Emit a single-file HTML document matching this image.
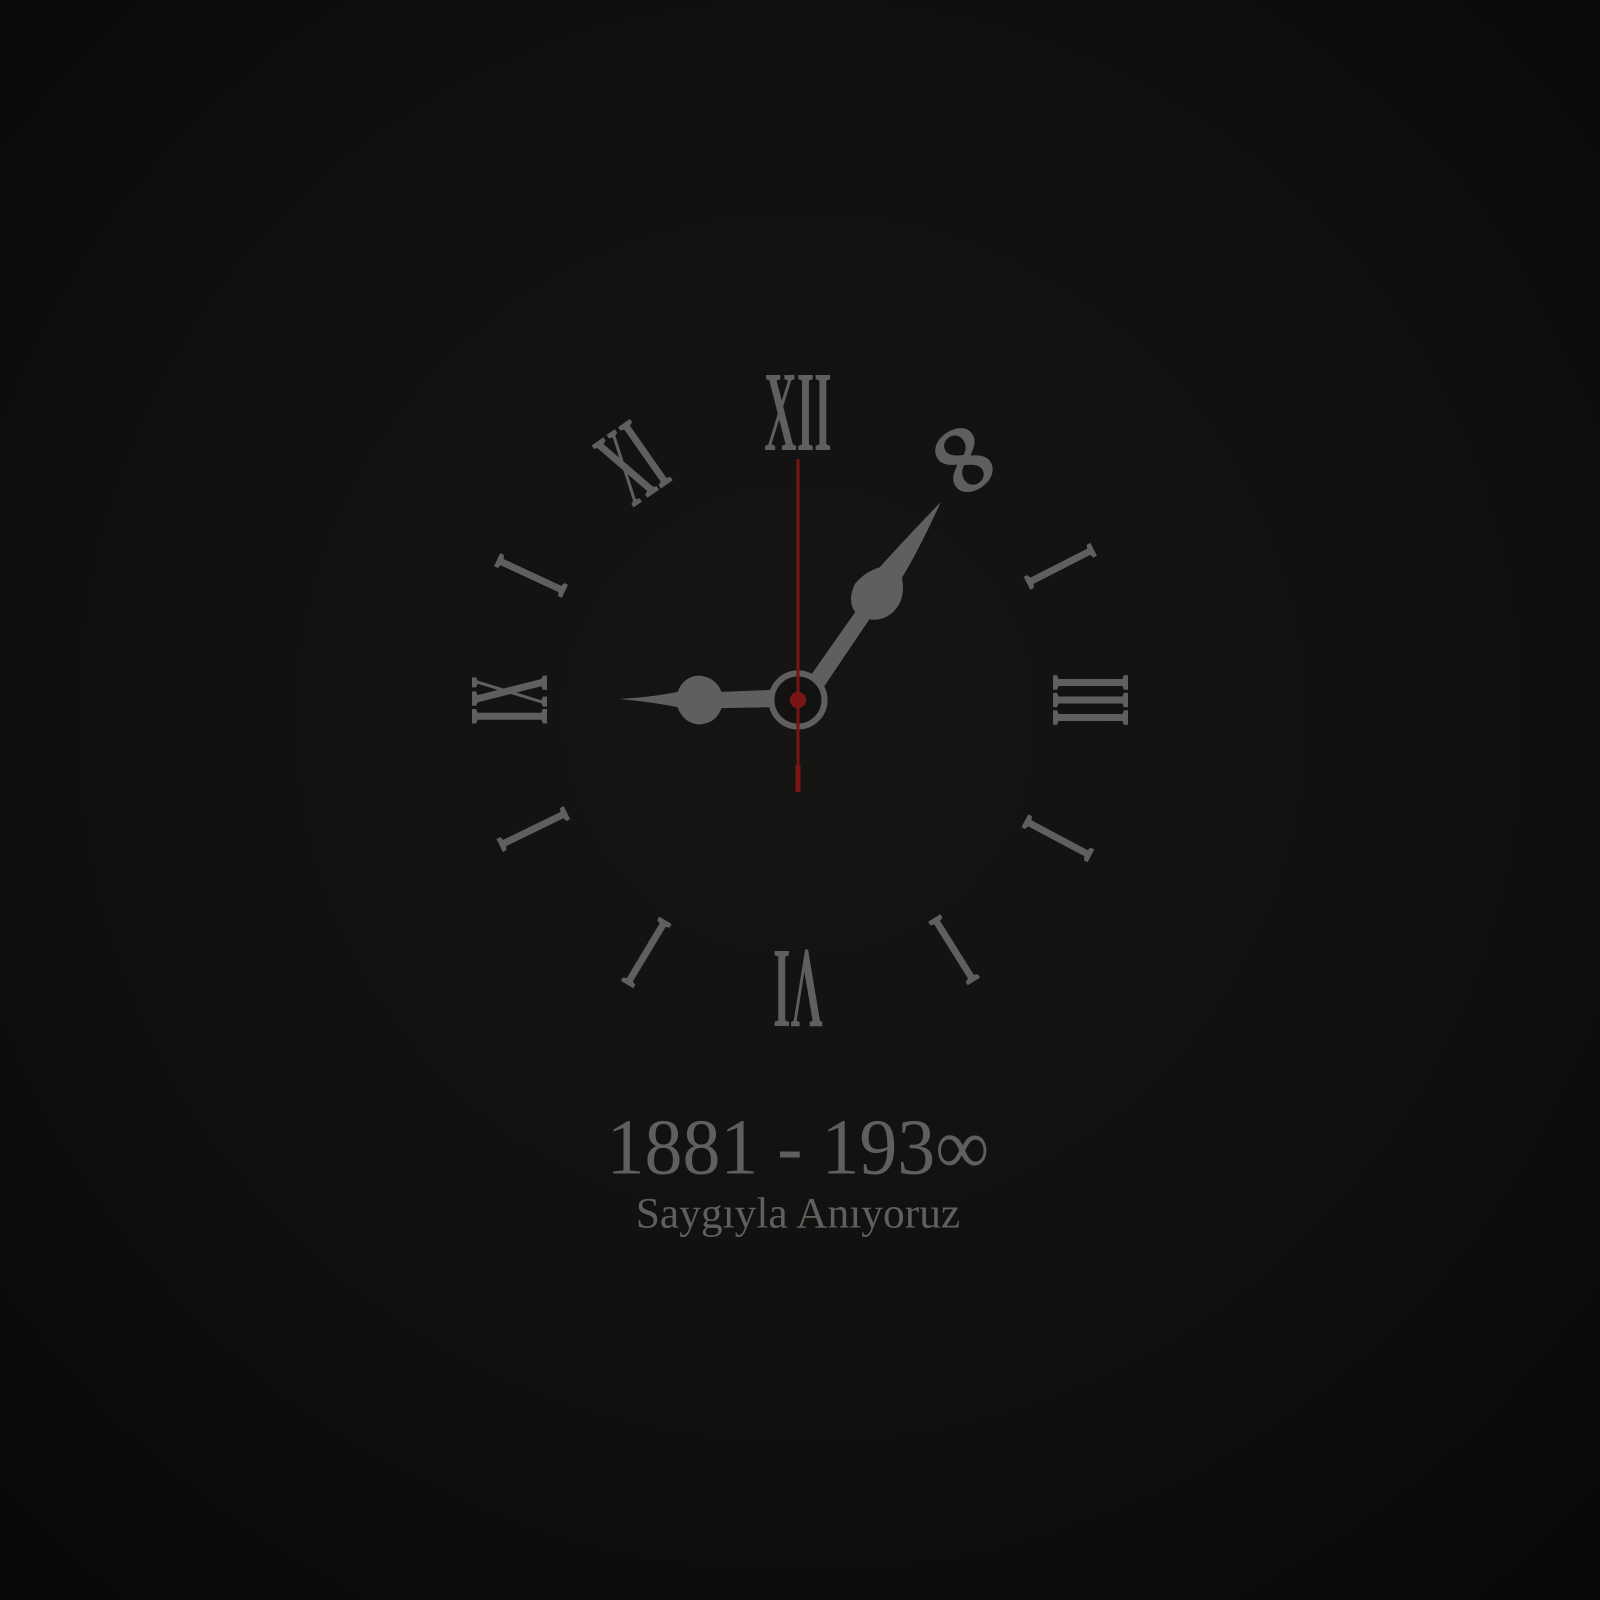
<!DOCTYPE html>
<html><head><meta charset="utf-8"><style>
html,body{margin:0;padding:0;width:1600px;height:1600px;overflow:hidden;background:#0b0b0a}
svg{display:block}
</style></head><body>
<svg width="1600" height="1600" viewBox="0 0 1568 1568" xmlns="http://www.w3.org/2000/svg">
<defs>
<radialGradient id="bg" cx="50%" cy="45%" r="70%">
<stop offset="0" stop-color="#151513"/>
<stop offset="0.6" stop-color="#10100f"/>
<stop offset="1" stop-color="#090908"/>
</radialGradient>
</defs>
<rect width="1568" height="1568" fill="url(#bg)"/>
<g fill="#5f5f5d" font-family="'Liberation Serif', 'DejaVu Serif', serif" font-weight="bold" font-size="80" text-anchor="middle">
<text transform="translate(782,686) rotate(0) translate(0,-283) scale(0.55,1.4)" dy="0.34em">XII</text>
<text transform="translate(782,686) rotate(35) translate(0,-290) rotate(22) scale(1.25,1.3)" dy="0.34em" font-family="'DejaVu Serif', serif">∞</text>
<text transform="translate(782,686) rotate(63) translate(0,-290) scale(0.55,1.4)" dy="0.34em">I</text>
<text transform="translate(782,686) rotate(90) translate(0,-288) scale(0.55,1.4)" dy="0.34em">III</text>
<text transform="translate(782,686) rotate(118) translate(0,-290) scale(0.55,1.4)" dy="0.34em">I</text>
<text transform="translate(782,686) rotate(148) translate(0,-290) scale(0.55,1.4)" dy="0.34em">I</text>
<text transform="translate(782,686) rotate(180) translate(0,-284) scale(0.55,1.4)" dy="0.34em">VI</text>
<text transform="translate(782,686) rotate(211) translate(0,-290) scale(0.55,1.4)" dy="0.34em">I</text>
<text transform="translate(782,686) rotate(244) translate(0,-290) scale(0.55,1.4)" dy="0.34em">I</text>
<text transform="translate(782,686) rotate(270) translate(0,-284) scale(0.55,1.4)" dy="0.34em">IX</text>
<text transform="translate(782,686) rotate(295) translate(0,-290) scale(0.55,1.4)" dy="0.34em">I</text>
<text transform="translate(782,686) rotate(325) translate(0,-285) scale(0.55,1.4)" dy="0.34em">XI</text>
</g>
<g fill="#5f5f5d">
<path d="M607,685 Q640,683 664,678 Q670,663 685,662 Q702,664 707,678 L760,676 L760,693 L707,694 Q702,709 685,710 Q670,709 664,693 Q640,688 607,685 Z"/>
<path d="M922,492 Q900,540 884,566 Q888,588 875,600 Q865,609 852,607 L800,684 L786,674 L838,600 Q830,588 838,572 Q848,560 862,556 Q890,525 922,492 Z"/>
<circle cx="782" cy="686" r="26" fill="#121211" stroke="#5f5f5d" stroke-width="6"/>
</g>
<line x1="782" y1="450" x2="782" y2="775" stroke="#7a1515" stroke-width="3"/>
<rect x="779.5" y="750" width="5" height="26" fill="#7a1515"/>
<circle cx="782" cy="686" r="8" fill="#7a1515"/>
<g fill="#5f5f5d" font-family="'Liberation Serif', 'DejaVu Serif', serif" text-anchor="middle">
<text x="782" y="1150" font-size="78" textLength="375" lengthAdjust="spacingAndGlyphs">1881 - 193∞</text>
<text x="782" y="1203" font-size="42" textLength="318" lengthAdjust="spacingAndGlyphs">Saygıyla Anıyoruz</text>
</g>
</svg>
</body></html>
